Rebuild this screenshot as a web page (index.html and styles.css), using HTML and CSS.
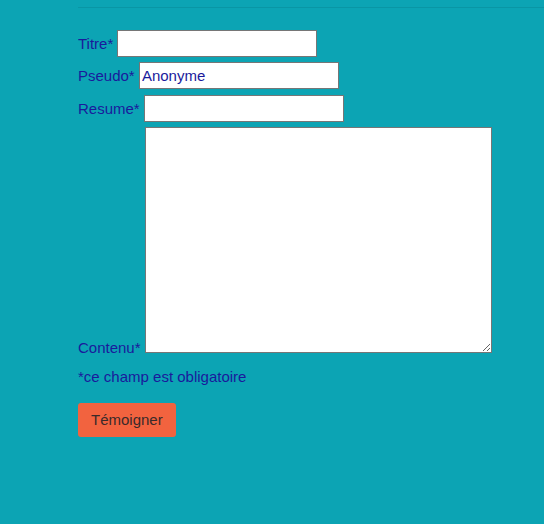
FILE: index.html
```html
<!DOCTYPE html>
<html lang="fr">
<head>
<meta charset="utf-8">
<title>Témoigner</title>
<link rel="stylesheet" href="styles.css">
</head>
<body>
<div class="page">
  <div class="rule"></div>
  <form class="form">
    <div class="row row-a"><label for="titre">Titre*</label> <input id="titre" type="text"></div>
    <div class="row row-b"><label for="pseudo">Pseudo*</label> <input id="pseudo" type="text" value="Anonyme"></div>
    <div class="row row-c"><label for="resume">Resume*</label> <input id="resume" type="text"></div>
    <div class="row"><label for="contenu">Contenu*</label> <textarea id="contenu"></textarea></div>
    <p class="note">*ce champ est obligatoire</p>
    <button type="button" class="btn">Témoigner</button>
  </form>
</div>
</body>
</html>
```

FILE: styles.css
```css
html, body {
  margin: 0;
  padding: 0;
}
body {
  background: #0ca4b4;
  font-family: "Liberation Sans", Arial, sans-serif;
  font-size: 15px;
  color: #1a1a9c;
  min-height: 524px;
}
.page {
  padding: 7px 0 0 78px;
}
.rule {
  border-top: 1px solid #0996a5;
}
.form {
  display: flex;
  flex-direction: column;
  align-items: flex-start;
  padding-top: 22px;
}
.row {
  line-height: 17px;
}
.row-a {
  margin-bottom: 5px;
}
.row-b {
  margin-bottom: 6px;
}
.row-c {
  margin-bottom: 5px;
}
.row label {
  color: #1a1a9c;
}
.row input {
  box-sizing: border-box;
  width: 200px;
  height: 27px;
  padding: 3px 2px;
  border: 1px solid #767676;
  margin: 0;
  font-family: "Liberation Sans", Arial, sans-serif;
  font-size: 15px;
  color: #1a1a9c;
  background: #fff;
}
.row textarea {
  box-sizing: border-box;
  width: 347px;
  height: 226px;
  border: 1px solid #767676;
  margin: 0;
  padding: 2px;
  font-family: "Liberation Sans", Arial, sans-serif;
  font-size: 15px;
  vertical-align: baseline;
  background: #fff;
}
.note {
  margin: 12px 0 18px 0;
  line-height: 17px;
}
.btn {
  background: #f2633f;
  color: #3a2a2a;
  border: none;
  border-radius: 3px;
  font-family: "Liberation Sans", Arial, sans-serif;
  font-size: 15px;
  padding: 8px 13px 9px;
  line-height: 17px;
  cursor: pointer;
}
```
